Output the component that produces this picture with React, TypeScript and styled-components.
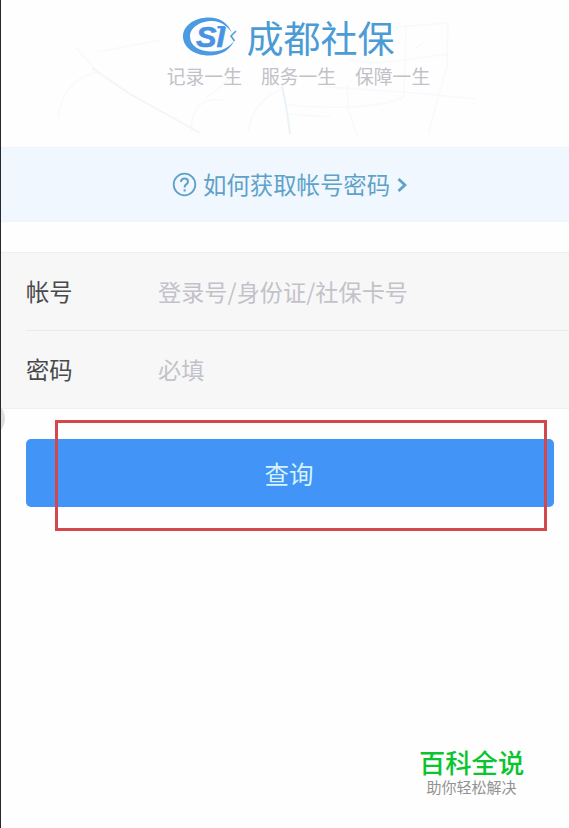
import React from "react";
import styled, { createGlobalStyle } from "styled-components";

const GlobalStyle = createGlobalStyle`
  * { box-sizing: border-box; }
  body {
    margin: 0;
    background: #fefefe;
    font-family: "Noto Sans CJK SC", sans-serif;
  }
`;

const Page = styled.main`
  position: relative;
  width: 569px;
  height: 828px;
  overflow: hidden;
  border-left: 1px solid #29292b;
  background: #fefefe;
`;

const Header = styled.header`
  position: relative;
  height: 147px;
  padding-top: 17px;
  display: flex;
  flex-direction: column;
  align-items: center;
`;

const MapBackdrop = styled.svg`
  position: absolute;
  inset: 0;
  width: 568px;
  height: 147px;
  fill: none;
  stroke: #f7f9fb;
  stroke-width: 1.5;
`;

const Brand = styled.div`
  position: relative;
  display: flex;
  align-items: center;
  gap: 10px;
  height: 40px;
  margin-left: 7px;
`;

const Logo = styled.svg`
  width: 54px;
  height: 42px;
  display: block;
`;

const BrandName = styled.h1`
  margin: 0;
  font-size: 37px;
  line-height: 40px;
  font-weight: 400;
  color: #4b9bd5;
`;

const Slogans = styled.div`
  position: relative;
  display: flex;
  gap: 19px;
  margin: 8px 0 0 27px;
  font-size: 18.8px;
  line-height: 22px;
  font-weight: 400;
  color: #c3c1c8;
`;

const HelpLink = styled.a`
  display: flex;
  align-items: center;
  height: 75px;
  padding-left: 171px;
  background: #f0f7fe;
  border-top: 1px solid #edf5fa;
  border-bottom: 1px solid #edf5fa;
  color: #5fa2c9;
  font-size: 23.4px;
  line-height: 34px;
`;

const HelpText = styled.span`
  padding-bottom: 1px;
`;

const HelpIcon = styled.svg`
  width: 25px;
  height: 25px;
  margin-right: 6px;
`;

const Chevron = styled.svg`
  width: 10px;
  height: 16px;
  margin-left: 7px;
`;

const Fields = styled.form`
  margin-top: 30px;
  height: 157px;
  padding-left: 25px;
  background: #f7f7f7;
  border-top: 1px solid #efefef;
  border-bottom: 1px solid #f0f0f0;
`;

const Field = styled.label<{ $divided?: boolean }>`
  display: flex;
  align-items: center;
  height: 78px;
  padding-bottom: 2px;
  border-bottom: ${(p) => (p.$divided ? "1px solid #eaeaea" : "none")};
  font-size: 23.3px;
  color: #49494b;
`;

const FieldName = styled.span`
  width: 132px;
  line-height: 34px;
`;

const FieldInput = styled.input`
  flex: 1;
  height: 36px;
  padding: 0;
  border: 0;
  background: transparent;
  font: inherit;
  font-size: 23.2px;
  &::placeholder {
    color: #c3c2c9;
    opacity: 1;
  }
`;

const SubmitButton = styled.button`
  display: block;
  width: 528px;
  height: 68px;
  margin: 30px 0 0 25px;
  padding: 0 2px 0 0;
  border: 0;
  border-radius: 5px;
  background: #4394f7;
  color: #d5f3fc;
  font: inherit;
  font-size: 24.5px;
`;

const HighlightFrame = styled.div`
  position: absolute;
  left: 54px;
  top: 420px;
  width: 492px;
  height: 111px;
  border: 3px solid #d2484c;
`;

const EdgeHandle = styled.div`
  position: absolute;
  left: -30px;
  top: 401px;
  width: 34px;
  height: 35px;
  border-radius: 50%;
  background: #dedede;
`;

const Watermark = styled.aside`
  position: absolute;
  left: 418px;
  top: 747px;
  display: flex;
  flex-direction: column;
  align-items: center;
`;

const WatermarkTitle = styled.strong`
  font-size: 26.3px;
  line-height: 30px;
  font-weight: 500;
  color: #0ac52f;
`;

const WatermarkCaption = styled.span`
  font-size: 15px;
  line-height: 20px;
  font-weight: 400;
  color: #929292;
`;

export default function App() {
  return (
    <>
      <GlobalStyle />
      <Page>
        <Header>
          <MapBackdrop viewBox="0 0 568 147" aria-hidden="true">
            <path d="M96 52 160 40M75 48 97 72Q62 79 57 118M205 98 230 78M190 132Q190 96 222 100M247 132Q252 101 280 89M270 60 275 68M348 60 376 63 448 54M368 29 447 23 446 67 427 134M405 27 403 97Q372 112 286 105M324 87 404 92 475 99M346 85 347 109 356 136M286 114 330 117M414 49 424 41" />
            <path d="M91 68 129 94 199 133" stroke="#f1f6fa" strokeWidth="2" />
            <path d="M281 86Q286 108 289 134" stroke="#e9f2f6" strokeWidth="2" />
          </MapBackdrop>
          <Brand>
            <Logo viewBox="0 0 54 42" aria-label="CSI">
              <path
                d="M49 17C45 7 37 1.5 26 1.5C11 1.5 0 10 0 20.5C0 31 11 39.5 26 39.5C38 39.5 47 34 51 25C46 31.5 38 35.5 29 35.5C16 35.5 7 29.5 7 20.5C7 11.5 17 5 29 5C38 5 44.5 10 49 17Z"
                fill="#4a9be2"
              />
              <path d="M53 15 48 20 51.5 25" fill="none" stroke="#5a9fd8" strokeWidth="1.7" />
              <path d="M34.5 11.2H42" fill="none" stroke="#4a93e4" strokeWidth="2.4" />
              <text
                x="13"
                y="30.5"
                fontFamily="Liberation Sans, sans-serif"
                fontSize="29"
                fontWeight="700"
                fontStyle="italic"
                fill="#4a93e4"
                stroke="#4a93e4"
                strokeWidth="0.6"
                textLength="29"
                lengthAdjust="spacingAndGlyphs"
              >
                SI
              </text>
            </Logo>
            <BrandName>成都社保</BrandName>
          </Brand>
          <Slogans>
            <span>记录一生</span>
            <span>服务一生</span>
            <span>保障一生</span>
          </Slogans>
        </Header>

        <HelpLink>
          <HelpIcon viewBox="0 0 25 25" fill="none" stroke="currentColor" strokeWidth="1.8">
            <circle cx="12.5" cy="12.5" r="10.8" />
            <path d="M9 10Q9 6.5 12.6 6.5Q16 6.5 16 9.5Q16 11.2 14.2 12.4Q12.6 13.4 12.6 15.4M12.6 17.3V19.4" strokeWidth="2" />
          </HelpIcon>
          <HelpText>如何获取帐号密码</HelpText>
          <Chevron viewBox="0 0 10 16" fill="none" stroke="currentColor" strokeWidth="2.8">
            <path d="M1.5 2 8 8 1.5 14" />
          </Chevron>
        </HelpLink>

        <Fields>
          <Field $divided>
            <FieldName>帐号</FieldName>
            <FieldInput placeholder="登录号/身份证/社保卡号" />
          </Field>
          <Field>
            <FieldName>密码</FieldName>
            <FieldInput type="password" placeholder="必填" />
          </Field>
        </Fields>

        <SubmitButton type="button">查询</SubmitButton>
        <HighlightFrame />
        <EdgeHandle />
        <Watermark>
          <WatermarkTitle>百科全说</WatermarkTitle>
          <WatermarkCaption>助你轻松解决</WatermarkCaption>
        </Watermark>
      </Page>
    </>
  );
}
